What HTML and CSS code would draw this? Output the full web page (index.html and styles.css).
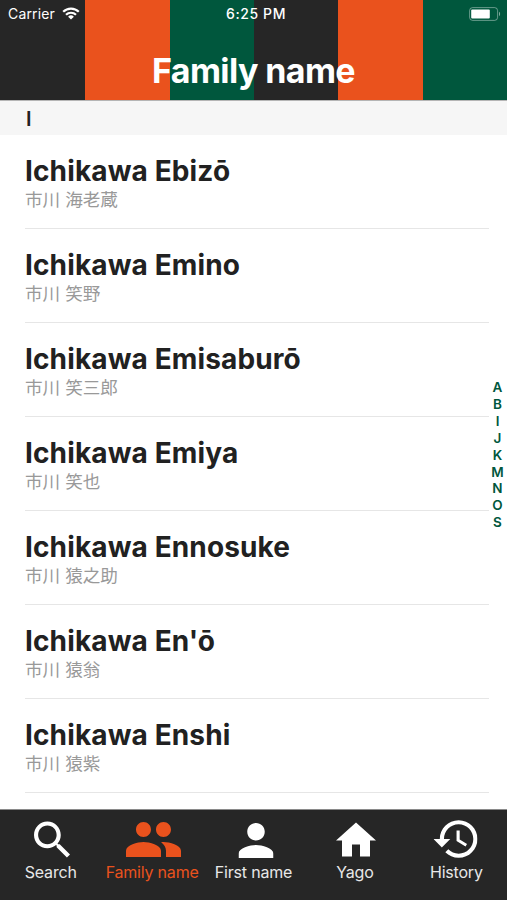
FILE: index.html
```html
<!DOCTYPE html>
<html lang="en">
<head>
  <meta charset="UTF-8">
  <meta name="viewport" content="width=device-width, initial-scale=1.0">
  <title>Family name</title>
  <link rel="stylesheet" href="styles.css">
</head>
<body>

<header>
  <div class="status">
    <div class="carrier">
      <span>Carrier</span>
      <svg class="wifi" viewBox="0 0 18 13" fill="none" stroke="#fff" stroke-width="2.2">
        <path d="M1.2 4.8a11 11 0 0 1 15.6 0M4 7.8a7.1 7.1 0 0 1 10 0"/>
        <path d="M9 12.6 6.1 9.8a4.1 4.1 0 0 1 5.8 0z" fill="#fff" stroke="none"/>
      </svg>
    </div>
    <span class="time">6:25 PM</span>
    <svg class="battery" viewBox="0 0 32 14">
      <rect x=".6" y=".6" width="28" height="12.8" rx="3" fill="none" stroke="#fff" stroke-opacity=".4"/>
      <rect x="2.2" y="2.4" width="18.6" height="9.2" rx="1" fill="#fff"/>
      <path d="M30 4.8v4.4c1.5-.6 1.5-3.8 0-4.4z" fill="#fff" fill-opacity=".5"/>
    </svg>
  </div>
  <h1>Family name</h1>
</header>

<main>
  <div class="section">I</div>
  <ul class="names">
    <li><h2>Ichikawa Ebizō</h2><p lang="ja">市川 海老蔵</p></li>
    <li><h2>Ichikawa Emino</h2><p lang="ja">市川 笑野</p></li>
    <li><h2>Ichikawa Emisaburō</h2><p lang="ja">市川 笑三郎</p></li>
    <li><h2>Ichikawa Emiya</h2><p lang="ja">市川 笑也</p></li>
    <li><h2>Ichikawa Ennosuke</h2><p lang="ja">市川 猿之助</p></li>
    <li><h2>Ichikawa En'ō</h2><p lang="ja">市川 猿翁</p></li>
    <li><h2>Ichikawa Enshi</h2><p lang="ja">市川 猿紫</p></li>
  </ul>
  <div class="index">
    <span>A</span>
    <span>B</span>
    <span>I</span>
    <span>J</span>
    <span>K</span>
    <span>M</span>
    <span>N</span>
    <span>O</span>
    <span>S</span>
  </div>
</main>

<nav>
  <div class="tab">
    <svg width="36" height="37" viewBox="3 3 17.49 17.49"><path d="M15.5 14h-.79l-.28-.27C15.41 12.59 16 11.11 16 9.5 16 5.91 13.09 3 9.5 3S3 5.91 3 9.5 5.91 16 9.5 16c1.61 0 3.09-.59 4.23-1.57l.27.28v.79l5 4.99L20.49 19l-4.99-5zm-6 0C7.01 14 5 11.99 5 9.5S7.01 5 9.5 5 14 7.01 14 9.5 11.99 14 9.5 14z"/></svg>
    <span>Search</span>
  </div>
  <div class="tab active">
    <svg width="55" height="35" viewBox="1 5 22 14"><path d="M16 11c1.66 0 2.99-1.34 2.99-3S17.66 5 16 5c-1.66 0-3 1.34-3 3s1.34 3 3 3zm-8 0c1.66 0 2.99-1.34 2.99-3S9.66 5 8 5C6.34 5 5 6.34 5 8s1.34 3 3 3zm0 2c-2.33 0-7 1.17-7 3.5V19h14v-2.5c0-2.33-4.67-3.5-7-3.5zm8 0c-.29 0-.62.02-.97.05 1.16.84 1.97 1.97 1.97 3.45V19h6v-2.5c0-2.33-4.67-3.5-7-3.5z"/></svg>
    <span>Family name</span>
  </div>
  <div class="tab">
    <svg class="person" width="35" height="35" viewBox="4 4 16 16"><path d="M12 12c2.21 0 4-1.79 4-4s-1.79-4-4-4-4 1.79-4 4 1.79 4 4 4zm0 2c-2.67 0-8 1.34-8 4v2h16v-2c0-2.66-5.33-4-8-4z"/></svg>
    <span>First name</span>
  </div>
  <div class="tab">
    <svg width="40" height="35" viewBox="2 3 20 17"><path d="M10 20v-6h4v6h5v-8h3L12 3 2 12h3v8z"/></svg>
    <span>Yago</span>
  </div>
  <div class="tab">
    <svg class="clock" width="44" height="38" viewBox="1 3 21 18"><path d="M13 3c-4.97 0-9 4.03-9 9H1l3.89 3.89.07.14L9 12H6c0-3.87 3.13-7 7-7s7 3.13 7 7-3.13 7-7 7c-1.93 0-3.68-.79-4.94-2.06l-1.42 1.42C8.27 19.99 10.51 21 13 21c4.97 0 9-4.03 9-9s-4.03-9-9-9zm-1 5v5l4.28 2.54.72-1.21-3.5-2.08V8H12z"/></svg>
    <span>History</span>
  </div>
</nav>

</body>
</html>
```

FILE: styles.css
```css
* {
  box-sizing: border-box;
}
body {
  font-family: Inter, "Noto Sans CJK JP", sans-serif;
  margin: 0;
  height: 900px;
  display: flex;
  flex-direction: column;
  background: #fff;
  color: #212121;
  overflow: hidden;
}
h1, h2, p, ul {
  margin: 0;
  padding: 0;
}
header {
  height: 100px;
  flex: none;
  color: #fff;
  background: linear-gradient(to right, #262626 16.8%, #ea521d 16.8% 33.5%, #00573d 33.5% 50.1%, #262626 50.1% 66.7%, #ea521d 66.7% 83.4%, #00573d 83.4%);
}
.status {
  display: grid;
  grid-template-columns: 1fr auto 1fr;
  align-items: center;
  height: 27px;
  padding: 0 6px 0 8px;
  font-size: 14px;
}
.carrier {
  display: flex;
  align-items: center;
  gap: 7px;
  letter-spacing: 0.15px;
}
.wifi {
  width: 18px;
  height: 13px;
}
.time {
  font-weight: 500;
  letter-spacing: 0.6px;
  padding-left: 3px;
}
.battery {
  width: 32px;
  height: 14px;
  justify-self: end;
}
h1 {
  text-align: center;
  font-size: 34px;
  font-weight: 700;
  line-height: 42px;
  margin-top: 23px;
  letter-spacing: -0.6px;
}
main {
  flex: 1;
  position: relative;
  border-top: 1px solid #b5b5b5;
}
.section {
  height: 34px;
  line-height: 36px;
  padding-left: 26px;
  background: #f6f6f6;
  font-size: 20px;
  font-weight: 600;
}
.names {
  list-style: none;
  padding: 0 18px 0 25px;
}
.names li {
  height: 94px;
  padding-top: 18px;
  border-bottom: 1px solid #e6e6e6;
}
h2 {
  font-size: 28px;
  font-weight: 700;
  line-height: 36px;
  letter-spacing: 0.13px;
}
.names p {
  color: #999;
  font-size: 17.6px;
  line-height: 22px;
  font-weight: 400;
}
/* letter index floats over the list */
.index {
  position: absolute;
  right: 2px;
  top: 278px;
  width: 15px;
  display: flex;
  flex-direction: column;
  align-items: center;
  color: #00573d;
  font-size: 13.5px;
  font-weight: 600;
  line-height: 16.9px;
}
nav {
  height: 91px;
  flex: none;
  display: flex;
  background: #262626;
  border-top: 1px solid #8a8a8a;
}
.tab {
  flex: 1;
  display: flex;
  flex-direction: column;
  align-items: center;
  color: #e8e8e8;
  font-size: 16px;
  letter-spacing: -0.2px;
  white-space: nowrap;
}
.tab svg {
  flex: none;
  margin: auto 0;
  fill: #fff;
  transform: translateX(1px);
}
.tab .person {
  transform: translate(2.5px, 1px);
}
.tab .clock {
  transform: translateX(-0.5px);
}
.tab span {
  height: 38px;
  line-height: 20px;
  margin-top: -6px;
}
.active {
  color: #ea521d;
}
.tab.active svg {
  fill: #ea521d;
}
```
